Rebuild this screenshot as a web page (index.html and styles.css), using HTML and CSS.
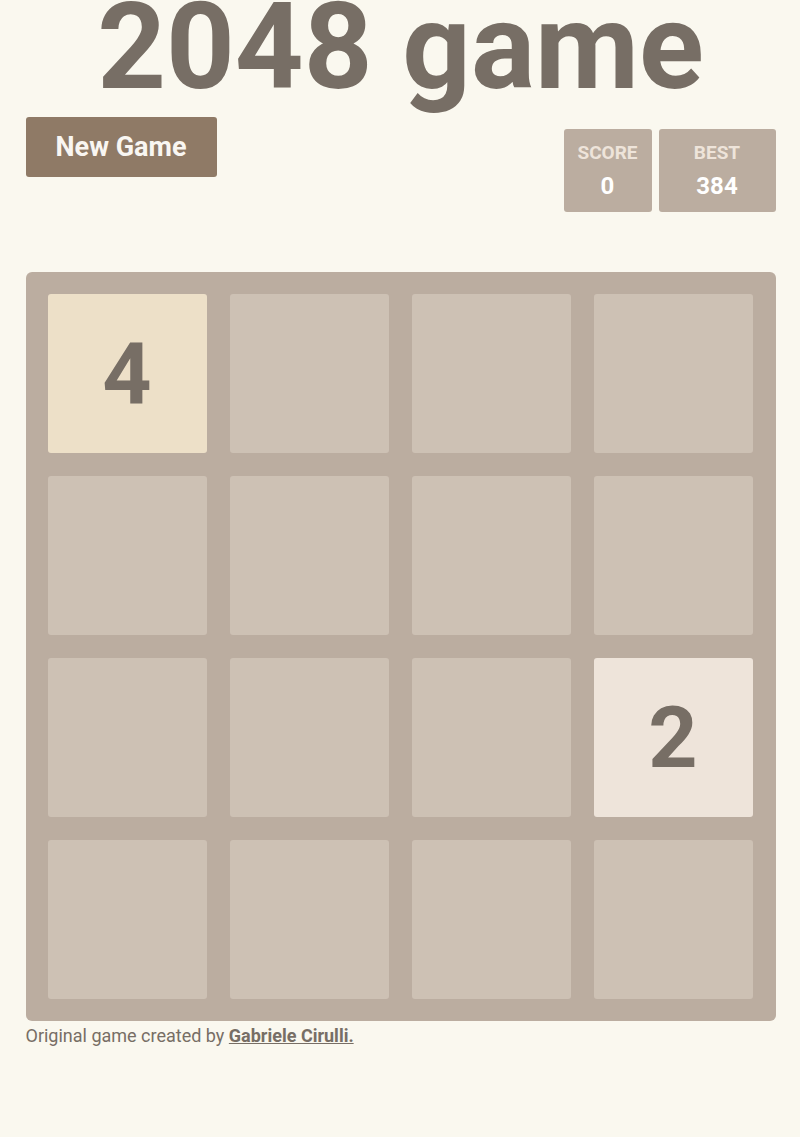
FILE: index.html
```html
<!DOCTYPE html>
<html lang="en">
<head>
    <meta charset="UTF-8">
    <meta name="viewport" content="width=device-width, initial-scale=1.0">
    <title>2048 game</title>
    <link rel="stylesheet" href="styles.css">
</head>
<body>
    <div class="container">
        <h1 class="title">2048 game</h1>
        <div class="heading">
            <button class="new-game">New Game</button>
            <div class="scores">
                <div class="score-box score">
                    <div class="score-label">SCORE</div>
                    <div class="score-value">0</div>
                </div>
                <div class="score-box best">
                    <div class="score-label">BEST</div>
                    <div class="score-value">384</div>
                </div>
            </div>
        </div>

        <!-- Game board -->
        <div class="board">
            <div class="cell tile tile-4">4</div>
            <div class="cell"></div>
            <div class="cell"></div>
            <div class="cell"></div>

            <div class="cell"></div>
            <div class="cell"></div>
            <div class="cell"></div>
            <div class="cell"></div>

            <div class="cell"></div>
            <div class="cell"></div>
            <div class="cell"></div>
            <div class="cell tile tile-2">2</div>

            <div class="cell"></div>
            <div class="cell"></div>
            <div class="cell"></div>
            <div class="cell"></div>
        </div>

        <p class="footer">Original game created by <a href="#">Gabriele Cirulli.</a></p>
    </div>
</body>
</html>
```

FILE: styles.css
```css
/* General Styles */
body {
    margin: 0;
    padding: 0;
    font-family: Roboto, "Liberation Sans", Arial, sans-serif;
    background-color: #faf8ef;
    color: #776e65;
}

.container {
    width: 750px;
    margin: 0 auto;
    padding-left: 1px;
}

.title {
    margin: -13px 0 0;
    font-size: 120px;
    font-weight: 700;
    line-height: 1;
    text-align: center;
    color: #776e65;
}

/* Heading: button + scores */
.heading {
    display: flex;
    justify-content: space-between;
    align-items: flex-start;
    margin-top: 10px;
}

.new-game {
    width: 191px;
    height: 60px;
    border: none;
    border-radius: 3px;
    background-color: #8f7a66;
    color: #f9f6f2;
    font-family: inherit;
    font-size: 27px;
    font-weight: 700;
    cursor: pointer;
}

.scores {
    display: flex;
    gap: 7px;
    margin-top: 12px;
}

.score-box {
    height: 83px;
    box-sizing: border-box;
    padding-top: 12px;
    border-radius: 3px;
    background-color: #bbada0;
    text-align: center;
}

.score { width: 88px; }
.best { width: 117px; }

.score-label {
    font-size: 19px;
    font-weight: 700;
    line-height: 24px;
    color: #eee4da;
}

.score-value {
    margin-top: 9px;
    font-size: 24px;
    font-weight: 700;
    line-height: 24px;
    color: #ffffff;
}

/* Board */
.board {
    display: grid;
    grid-template-columns: repeat(4, 159px);
    grid-template-rows: repeat(4, 159px);
    gap: 23px;
    padding: 22px;
    margin-top: 60px;
    border-radius: 6px;
    background-color: #bbada0;
}

.cell {
    border-radius: 3px;
    background-color: #cdc1b4;
}

.tile {
    display: flex;
    align-items: center;
    justify-content: center;
    font-size: 86px;
    font-weight: 700;
    color: #776e65;
}

.tile-2 { background-color: #eee4da; }
.tile-4 { background-color: #ede0c8; }

/* Footer */
.footer {
    margin: 4px 0 0;
    font-size: 18px;
    line-height: 22px;
}

.footer a {
    color: #776e65;
    font-weight: 700;
}
```
